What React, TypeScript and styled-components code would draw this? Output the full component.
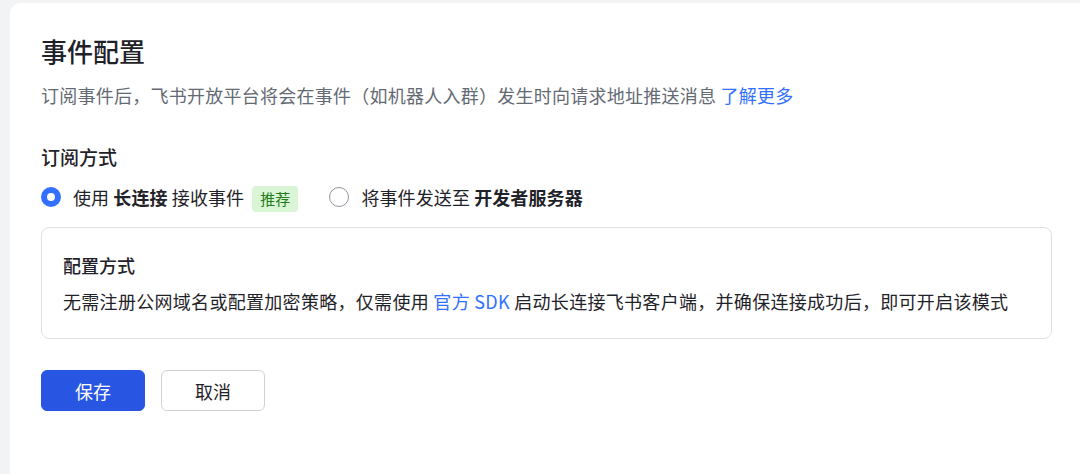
import * as React from 'react';
import styled, { createGlobalStyle } from 'styled-components';

const GlobalStyle = createGlobalStyle`
    html, body {
        margin: 0;
        padding: 0;
        background: #f2f3f5;
    }

    body {
        font-family: "Noto Sans CJK SC", "Noto Sans", "Liberation Sans", sans-serif;
        color: #1f2329;
    }
`;

const Page = styled.div`
    padding: 3px 0 0 10px;
    height: 474px;
    box-sizing: border-box;
    overflow: hidden;
`;

const Card = styled.div`
    background: #ffffff;
    border-radius: 10px 0 0 0;
    height: 100%;
    padding: 30px 28px 0 31px;
    box-sizing: border-box;
`;

const Title = styled.h1`
    margin: 0;
    font-size: 26px;
    line-height: 36px;
    font-weight: 500;
    color: #1f2329;
`;

const Subtitle = styled.p`
    margin: 13px 0 0;
    font-size: 18px;
    line-height: 26px;
    letter-spacing: 0.25px;
    color: #646a73;
`;

const Link = styled.a`
    color: #3370ff;
    text-decoration: none;
    cursor: pointer;
`;

const SectionTitle = styled.h2`
    margin: 35px 0 0;
    font-size: 19px;
    line-height: 28px;
    font-weight: 500;
    color: #1f2329;
`;

const RadioGroup = styled.div`
    display: flex;
    align-items: center;
    gap: 31px;
    margin-top: 12px;
    height: 28px;
`;

const RadioOption = styled.label`
    display: flex;
    align-items: center;
    gap: 12px;
    font-size: 18px;
    line-height: 28px;
    letter-spacing: 0.1px;
    color: #1f2329;
    cursor: pointer;
`;

const RadioDot = styled.span<{ $checked?: boolean }>`
    width: 20px;
    height: 20px;
    border-radius: 50%;
    box-sizing: border-box;
    flex-shrink: 0;
    background: #ffffff;
    border: ${p => (p.$checked ? '6px solid #3370ff' : '1.5px solid #8f959e')};
`;

const Strong = styled.b`
    font-weight: 600;
`;

const Tag = styled.span`
    display: inline-flex;
    align-items: center;
    height: 26px;
    padding: 0 8px;
    margin-left: 8px;
    border-radius: 4px;
    background: #d9f5d6;
    color: #237b19;
    font-size: 15px;
    line-height: 26px;
`;

const InfoBox = styled.div`
    margin-top: 16px;
    border: 1px solid #dee0e3;
    border-radius: 8px;
    padding: 24px 21px 24px 21px;
`;

const InfoTitle = styled.div`
    font-size: 18px;
    line-height: 26px;
    font-weight: 500;
    color: #1f2329;
`;

const InfoText = styled.div`
    margin-top: 10px;
    font-size: 18px;
    line-height: 26px;
    letter-spacing: 0.3px;
    color: #1f2329;
`;

const Actions = styled.div`
    display: flex;
    gap: 16px;
    margin-top: 31px;
`;

const Button = styled.button<{ $primary?: boolean }>`
    width: 104px;
    height: 41px;
    border-radius: 6px;
    font-family: inherit;
    font-size: 18px;
    cursor: pointer;
    box-sizing: border-box;
    background: ${p => (p.$primary ? '#2955e3' : '#ffffff')};
    color: ${p => (p.$primary ? '#ffffff' : '#1f2329')};
    border: 1px solid ${p => (p.$primary ? '#2955e3' : '#d0d3d6')};
`;

const App: React.FunctionComponent = () => (
    <>
        <GlobalStyle />
        <Page>
            <Card>
                <Title>事件配置</Title>
                <Subtitle>
                    订阅事件后，飞书开放平台将会在事件（如机器人入群）发生时向请求地址推送消息 <Link>了解更多</Link>
                </Subtitle>

                <SectionTitle>订阅方式</SectionTitle>
                <RadioGroup>
                    <RadioOption>
                        <RadioDot $checked />
                        <span>
                            使用 <Strong>长连接</Strong> 接收事件
                            <Tag>推荐</Tag>
                        </span>
                    </RadioOption>
                    <RadioOption>
                        <RadioDot />
                        <span>
                            将事件发送至 <Strong>开发者服务器</Strong>
                        </span>
                    </RadioOption>
                </RadioGroup>

                <InfoBox>
                    <InfoTitle>配置方式</InfoTitle>
                    <InfoText>
                        无需注册公网域名或配置加密策略，仅需使用 <Link>官方 SDK</Link> 启动长连接飞书客户端，并确保连接成功后，即可开启该模式
                    </InfoText>
                </InfoBox>

                <Actions>
                    <Button $primary>保存</Button>
                    <Button>取消</Button>
                </Actions>
            </Card>
        </Page>
    </>
);

export default App;
